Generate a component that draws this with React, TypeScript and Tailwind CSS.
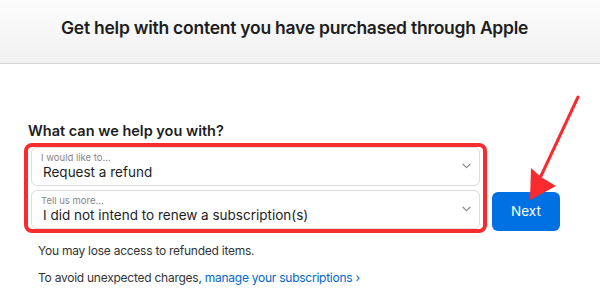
import React from "react";

function Chevron() {
  return (
    <svg width="9" height="6" viewBox="0 0 9 6" className="shrink-0">
      <path d="M1 1.2 L4.5 4.6 L8 1.2" fill="none" stroke="#8a8a8e" strokeWidth="1.2" strokeLinecap="round" strokeLinejoin="round" />
    </svg>
  );
}

function Select({ label, value }: { label: string; value: string }) {
  return (
    <div className="h-[39px] rounded-[6px] border border-[#dcdcdc] bg-white flex items-center pl-[9px] pr-[8px]">
      <div className="flex-1 flex flex-col leading-none">
        <span className="text-[9.5px] text-[#86868b]">{label}</span>
        <span className="text-[13.5px] text-[#1d1d1f] mt-[3px] pl-[2px]">{value}</span>
      </div>
      <Chevron />
    </div>
  );
}

export default function App() {
  return (
    <div className="relative w-[600px] h-[296px] bg-white overflow-hidden" style={{ fontFamily: "Inter, 'Liberation Sans', sans-serif" }}>
      <header className="h-[64px] bg-gradient-to-b from-[#fcfcfc] to-[#f1f1f1] border-b border-[#d6d6d6] flex items-start pt-[15px] pl-[61px]">
        <h1 className="text-[17.5px] font-semibold text-[#1d1d1f] tracking-[-0.25px]">
          Get help with content you have purchased through Apple
        </h1>
      </header>
      <main className="pl-[24px] pt-[60px]">
        <h2 className="text-[14.5px] font-semibold text-[#1d1d1f] pl-[4px] leading-none">What can we help you with?</h2>
        <div className="flex items-end mt-[4px]">
          <div className="w-[463px] border-[4px] border-[#fa2b2f] rounded-[8px] px-[3px] flex flex-col gap-[4px]">
            <Select label="I would like to..." value="Request a refund" />
            <Select label="Tell us more..." value="I did not intend to renew a subscription(s)" />
          </div>
          <button className="ml-[5px] mb-[2px] w-[68px] h-[39px] rounded-[6px] bg-[#0071e3] text-white text-[13.5px]">
            Next
          </button>
        </div>
        <div className="pl-[14px] mt-[12px] text-[12px] tracking-[-0.25px] text-[#333336] leading-none">
          <p>You may lose access to refunded items.</p>
          <p className="mt-[15px]">
            To avoid unexpected charges, <span className="text-[#0066cc]">manage your subscriptions ›</span>
          </p>
        </div>
      </main>
      <svg className="absolute left-0 top-0 pointer-events-none" width="600" height="296" viewBox="0 0 600 296">
        <path d="M578 97 L541 176" stroke="#fa2b2f" strokeWidth="3" strokeLinecap="round" />
        <path d="M530 200 L531 168 L541 177 L556 186 Z" fill="#fa2b2f" />
      </svg>
    </div>
  );
}
